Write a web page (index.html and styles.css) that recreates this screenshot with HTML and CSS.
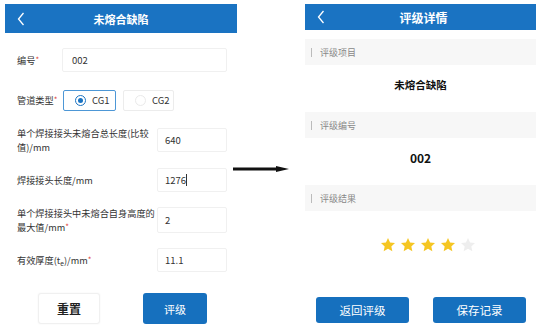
FILE: index.html
```html
<!DOCTYPE html>
<html lang="zh">
<head>
<meta charset="utf-8">
<link rel="stylesheet" href="styles.css">
</head>
<body>
<div class="page">
  <section class="panel left">
    <header class="bar bar-left">
      <svg class="back" width="8" height="14" viewBox="0 0 8 14"><polyline points="6.5,1 1.5,7 6.5,13" fill="none" stroke="#fff" stroke-width="1.3"/></svg>
      <span class="title">未熔合缺陷</span>
    </header>
    <div class="form">
      <div class="row">
        <label class="lbl lbl-short">编号<i>*</i></label>
        <div class="input input-wide">002</div>
      </div>
      <div class="row">
        <label class="lbl lbl-short2">管道类型<i>*</i></label>
        <div class="radios">
          <div class="radio on"><span class="dot"></span>CG1</div>
          <div class="radio"><span class="dot"></span>CG2</div>
        </div>
      </div>
      <div class="row">
        <label class="lbl lbl-long">单个焊接接头未熔合总长度(比较<br>值)/mm</label>
        <div class="input input-narrow">640</div>
      </div>
      <div class="row">
        <label class="lbl lbl-long">焊接接头长度/mm</label>
        <div class="input input-narrow">1276<span class="caret"></span></div>
      </div>
      <div class="row">
        <label class="lbl lbl-long">单个焊接接头中未熔合自身高度的<br>最大值/mm<i>*</i></label>
        <div class="input input-narrow tall">2</div>
      </div>
      <div class="row">
        <label class="lbl lbl-long">有效厚度(t<sub>e</sub>)/mm<i>*</i></label>
        <div class="input input-narrow">11.1</div>
      </div>
    </div>
    <div class="actions actions-left">
      <button class="btn btn-plain">重置</button>
      <button class="btn btn-blue btn-rate">评级</button>
    </div>
  </section>

  <div class="arrow">
    <svg width="56" height="8" viewBox="0 0 56 8"><line x1="0" y1="4" x2="46" y2="4" stroke="#111" stroke-width="3"/><polygon points="43,1 56,4 43,7" fill="#111"/></svg>
  </div>

  <section class="panel right">
    <header class="bar bar-right">
      <svg class="back" width="8" height="14" viewBox="0 0 8 14"><polyline points="6.5,1 1.5,7 6.5,13" fill="none" stroke="#fff" stroke-width="1.3"/></svg>
      <span class="title">评级详情</span>
    </header>
    <div class="band first"><span class="mark"></span>评级项目</div>
    <div class="value">未熔合缺陷</div>
    <div class="band"><span class="mark"></span>评级编号</div>
    <div class="value num">002</div>
    <div class="band"><span class="mark"></span>评级结果</div>
    <div class="stars">
      <svg class="star on" viewBox="0 0 24 24"><polygon points="12,1.5 15.1,8.3 22.5,9.1 17,14.1 18.5,21.4 12,17.7 5.5,21.4 7,14.1 1.5,9.1 8.9,8.3"/></svg>
      <svg class="star on" viewBox="0 0 24 24"><polygon points="12,1.5 15.1,8.3 22.5,9.1 17,14.1 18.5,21.4 12,17.7 5.5,21.4 7,14.1 1.5,9.1 8.9,8.3"/></svg>
      <svg class="star on" viewBox="0 0 24 24"><polygon points="12,1.5 15.1,8.3 22.5,9.1 17,14.1 18.5,21.4 12,17.7 5.5,21.4 7,14.1 1.5,9.1 8.9,8.3"/></svg>
      <svg class="star on" viewBox="0 0 24 24"><polygon points="12,1.5 15.1,8.3 22.5,9.1 17,14.1 18.5,21.4 12,17.7 5.5,21.4 7,14.1 1.5,9.1 8.9,8.3"/></svg>
      <svg class="star" viewBox="0 0 24 24"><polygon points="12,1.5 15.1,8.3 22.5,9.1 17,14.1 18.5,21.4 12,17.7 5.5,21.4 7,14.1 1.5,9.1 8.9,8.3"/></svg>
    </div>
    <div class="actions actions-right">
      <button class="btn btn-blue btn-wide">返回评级</button>
      <button class="btn btn-blue btn-wide">保存记录</button>
    </div>
  </section>
</div>
</body>
</html>
```

FILE: styles.css
```css
* { box-sizing: border-box; }
html, body { margin: 0; padding: 0; background: #fff; }
body {
  font-family: "Noto Sans CJK SC", "Noto Sans", sans-serif;
  color: #333;
  width: 543px;
  height: 334px;
  overflow: hidden;
}
.page {
  display: flex;
  padding: 4px 0 0 5px;
}
.panel { display: flex; flex-direction: column; }
.left { width: 232px; }
.right { width: 231px; }

.bar {
  position: relative;
  background: #1a73c2;
  display: flex;
  align-items: center;
  justify-content: center;
  color: #fff;
  font-weight: bold;
}
.bar-left { height: 29px; font-size: 11px; }
.bar-right { height: 26px; font-size: 12px; }
.bar-right .title { margin-left: 6px; }
.back { position: absolute; left: 12px; top: 50%; margin-top: -7px; }

.form { padding: 7px 0 0 12px; display: flex; flex-direction: column; }
.row { height: 40px; display: flex; align-items: center; }
.lbl { font-size: 9.2px; line-height: 14px; color: #333; white-space: nowrap; }
.lbl i { font-style: normal; color: #e0463b; font-size: 8px; vertical-align: top; }
.lbl sub { font-size: 6.5px; vertical-align: -2px; line-height: 0; }
.lbl-short { width: 45px; }
.lbl-short2 { width: 46px; }
.lbl-long { width: 140px; }

.input {
  height: 24px;
  border: 1px solid #f0f0f0;
  border-radius: 2px;
  background: #fff;
  font-size: 9.5px;
  color: #333;
  display: flex;
  align-items: center;
}
.input-wide { width: 165px; padding-left: 9px; }
.input-narrow { width: 70px; padding-left: 7px; }
.input.tall { height: 26px; }
.caret { display: inline-block; width: 1px; height: 12px; background: #333; }

.radios { display: flex; gap: 7px; }
.radio {
  height: 21px;
  border: 1px solid #ececec;
  border-radius: 2px;
  display: flex;
  align-items: center;
  font-size: 9.5px;
  color: #333;
  padding-left: 11px;
  gap: 6px;
  width: 51px;
}
.radio.on { border-color: #4d97d6; width: 53px; }
.dot {
  width: 11px; height: 11px; border-radius: 50%;
  border: 1px solid #eaeaea;
  position: relative;
}
.radio.on .dot { border-color: #1a73c2; }
.radio.on .dot::after {
  content: ""; position: absolute; left: 2px; top: 2px;
  width: 5px; height: 5px; border-radius: 50%; background: #1a73c2;
}

.actions { display: flex; }
.actions-left { margin-top: 13px; padding-left: 33px; gap: 43px; }
.btn {
  font-family: inherit;
  border-radius: 3px;
  border: 1px solid transparent;
  padding: 0;
  cursor: pointer;
}
.btn-plain {
  width: 62px; height: 31px;
  background: #fff;
  border-color: #f0f0f0;
  box-shadow: 0 0 2px rgba(0,0,0,0.06);
  font-size: 12px; font-weight: bold; color: #222;
}
.btn-blue { background: #1670be; color: #fff; font-size: 11.5px; }
.btn-rate { width: 64px; height: 31px; font-size: 11px; }
.btn-wide { width: 93px; height: 26px; font-size: 11.5px; }

.arrow { width: 68px; padding-top: 161px; }
.arrow svg { display: block; margin-left: -4px; }

.band {
  height: 26px;
  background: #f7f7f7;
  display: flex;
  align-items: center;
  font-size: 9px;
  color: #888;
  padding-left: 6px;
}
.band.first { margin-top: 9px; }
.mark { width: 1px; height: 9px; background: #bbb; margin-right: 8px; }
.value {
  padding: 12px 0 19px;
  height: 47px;
  line-height: 16px;
  text-align: center;
  font-weight: bold;
  font-size: 10.5px;
  color: #111;
}
.value.num { font-size: 12px; }
.stars {
  margin-top: 26px;
  height: 16px;
  display: flex;
  justify-content: center;
  gap: 4px;
  padding-left: 15px;
}
.star { width: 16px; height: 16px; fill: #eeeeee; }
.star.on { fill: #f5c623; }
.actions-right { margin-top: 44px; padding-left: 11px; gap: 24px; }
```
